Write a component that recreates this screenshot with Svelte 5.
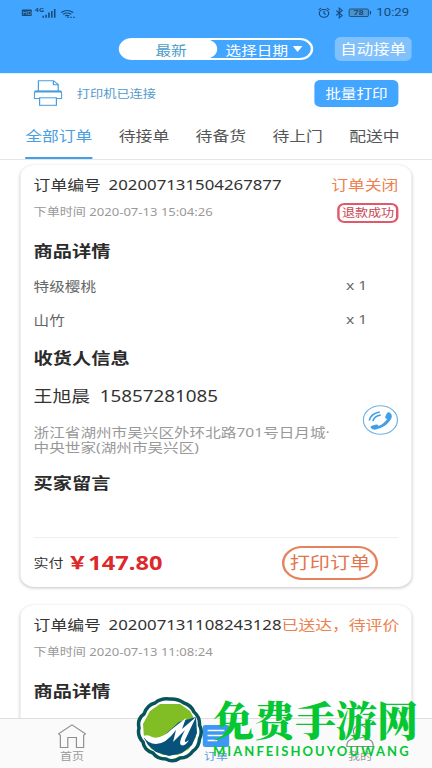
<script>
    let dateMode = "最新";
    let activeTab = "全部订单";
    const tabs = ["全部订单", "待接单", "待备货", "待上门", "配送中"];

    const orders = [
        {
            id: "202007131504267877",
            time: "2020-07-13 15:04:26",
            status: "订单关闭",
            refund: "退款成功",
            items: [
                { name: "特级樱桃", count: 1 },
                { name: "山竹", count: 1 },
            ],
            receiver: "王旭晨",
            phone: "15857281085",
            address: ["浙江省湖州市吴兴区外环北路701号日月城·", "中央世家(湖州市吴兴区)"],
            total: "147.80",
        },
        {
            id: "202007131108243128",
            time: "2020-07-13 11:08:24",
            status: "已送达，待评价",
            items: [],
        },
    ];
</script>

<div class="page">
    <div class="app">
        <header class="header">
            <div class="status-bar">
                <svg width="53" height="14" viewBox="0 0 53 14">
                    <rect x="0" y="3.5" width="8.5" height="6.500" rx="1" fill="#174a78" />
                    <text x="1" y="8.700" font-size="5" fill="#5ca8e8">HD</text>
                    <text x="11" y="6" font-size="6" font-weight="bold" fill="#174a78">4G</text>
                    <path d="M18 11.7v-2M20.4 11.7v-3M22.8 11.7V6.5M25.2 11.7V5M27.6 11.7V3" stroke="#174a78" stroke-width="1.3" />
                    <path d="M33 6.5q5-4 10 0M34.6 8.3q3.4-2.7 6.8 0M36.3 10q1.7-1.3 3.4 0" fill="none" stroke="#174a78" stroke-width="1.1" />
                    <path d="M38 11.3h1.2M40.5 11.3h1.2M43 11.3h1.2" stroke="#174a78" stroke-width="1.3" />
                </svg>
                <div class="status-right">
                    <svg width="46" height="14" viewBox="0 0 46 14">
                        <g fill="none" stroke="#174a78">
                            <circle cx="5" cy="7.3" r="3.9" />
                            <path d="M5 5v2.5l1.6 1M.5 4l2-2M9.500 4l-2-2" />
                            <path d="M15.2 4.6l5 5-2.5 2.3v-9.8l2.5 2.3-5 5" stroke-width=".9" />
                            <rect x="26" y="3" width="16" height="7.5" rx="1" fill="#4c92cc" stroke-width=".8" />
                            <path d="M43.7 5v3.5" />
                        </g>
                        <text x="29.500" y="9.500" font-size="7.5" font-weight="bold" fill="#174a78">78</text>
                    </svg>
                    <span>10:29</span>
                </div>
            </div>
            <div class="toolbar">
                <div class="switch">
                    <button class="switch-item" class:selected={dateMode === "最新"}>最新</button>
                    <button class="switch-item date">选择日期<i class="arrow"></i></button>
                </div>
                <button class="auto">自动接单</button>
            </div>
        </header>

        <div class="printer">
            <svg width="24" height="26" viewBox="0 0 24 26" fill="none" stroke="#479ddd">
                <path d="M4 11V.7h12.5l4 3.8V11M16.5.7v4h4" />
                <path d="M4.5 18.5H.6v-5.3q0-2 2-2h18.8q2 0 2 2v5.3h-4" />
                <path d="M.8 11.5h22.4" stroke-width="2" />
                <rect x="5" y="17.8" width="14" height="7.5" />
            </svg>
            <span class="printer-state">打印机已连接</span>
            <button class="batch">批量打印</button>
        </div>

        <nav class="tabs">
            {#each tabs as tab}
                <button class="tab" class:active={tab === activeTab} on:click={() => (activeTab = tab)}>{tab}</button>
            {/each}
        </nav>

        <main class="orders">
            {#each orders as order}
                <section class="card">
                    <div class="row order-id">
                        <span>订单编号</span>
                        <span class="number">{order.id}</span>
                        <span class="status">{order.status}</span>
                    </div>
                    <div class="row order-time">
                        <span>下单时间 {order.time}</span>
                        {#if order.refund}
                            <span class="refund">{order.refund}</span>
                        {/if}
                    </div>
                    <h2 class="goods-title">商品详情</h2>
                    {#each order.items as item}
                        <div class="row item">
                            <span>{item.name}</span>
                            <span>x {item.count}</span>
                        </div>
                    {/each}
                    {#if order.receiver}
                        <h2>收货人信息</h2>
                        <div class="contact">
                            <div>
                                <div class="receiver">
                                    <span>{order.receiver}</span>
                                    <span>{order.phone}</span>
                                </div>
                                <div class="address">
                                    {#each order.address as line}
                                        <div>{line}</div>
                                    {/each}
                                </div>
                            </div>
                            <svg class="call" width="30" height="30" viewBox="0 0 30 30">
                                <circle cx="15" cy="15" r="14.2" fill="none" stroke="#70b3e3" />
                                <path d="M20.5 8.1 Q22 6.7 23.3 8 Q25.8 11 23.2 15.2 Q19 22.5 11 24.6 Q7.7 25 6.8 22.5 Q6.5 21.2 8.6 20.5 L11.6 19.5 Q13.2 19.3 13.5 21 Q18.3 18.5 20.6 14 Q18.8 13.4 19 11.7 Z" fill="#3f9fe8" />
                                <path d="M5.8 15.5Q7 8.5 14.5 7M8.7 16.2Q9.8 11 15.3 10" fill="none" stroke="#3f9fe8" stroke-width="1.4" />
                            </svg>
                        </div>
                        <h2 class="message-title">买家留言</h2>
                        <div class="card-footer">
                            <span>实付</span>
                            <strong class="price"><span class="yen">￥</span>{order.total}</strong>
                            <button class="print">打印订单</button>
                        </div>
                    {/if}
                </section>
            {/each}
        </main>

        <footer class="bottom-nav">
            <div class="nav-item">
                <svg width="24" height="25" viewBox="0 0 24 25" fill="none" stroke="#8f8f8f">
                    <path d="M2.3 11.3.8 9.8 12 .8l11.2 9-1.5 1.5V23.4h-6V13.6H8.5v9.8H2.3z" />
                </svg>
                <span>首页</span>
            </div>
            <div class="nav-item current">
                <svg width="24" height="25" viewBox="0 0 24 25">
                    <rect x="1" y="1" width="22" height="22" rx="2" fill="#3d98f5" />
                    <path d="M5 6.5h14M5 11.5h14M5 16.5h8" stroke="#fff" stroke-width="1.6" />
                </svg>
                <span>订单</span>
            </div>
            <div class="nav-item">
                <svg width="24" height="25" viewBox="0 0 24 25" fill="none" stroke="#8f8f8f">
                    <ellipse cx="12" cy="7.5" rx="5.5" ry="6.5" />
                    <path d="M8.5 13 3 16.5Q1 18 1 22.5h22q0-4.5-2-6L15.5 13" />
                </svg>
                <span>我的</span>
            </div>
        </footer>
    </div>

    <div class="watermark">
        <svg width="67" height="66" viewBox="0 0 67 66">
            <path d="M33.5 2 Q42 1.5 48 6 Q55 8 58 15 Q64 20 63.5 28 Q67 35 63.5 42 Q63 50 57 54 Q52 61 44 61 Q37 66 30 62 Q21 62 17 56 Q8 53 7 45 Q1 39 3 31 Q1 22 8 17 Q11 8 19 6 Q25 1 33.5 2Z" fill="#fff" stroke="#07545a" stroke-width="3.5" />
            <path d="M24 7H44L54 14 60 25 60 40 53 52 42 58 27 58 15 52 8 41 7 27 14 14Z" fill="#81bd24" />
            <path d="M8 41Q22 47 33 34L43 25 60 20 61 36 56 48 46 56 33 59 20 55 12 48Z" fill="#06527b" />
            <path d="M7 39Q12 37 16 40Q25 43 36 32L50 21 46 32 60 20 49 43Q48 47 53 43 49 50 45 48 42 46 49 33L37 45 40 33Q30 47 20 47 12 47 7 39Z" fill="#fff" />
        </svg>
        <div class="brand">
            <div class="brand-name">免费手游网</div>
            <div class="brand-latin">MIANFEISHOUYOUWANG</div>
        </div>
    </div>
</div>

<style>
    :global(body) {
        margin: 0;
        background-color: #ffffff;
    }

    .page {
        position: relative;
        width: 432px;
        height: 768px;
        overflow: hidden;
        font-family: "Noto Sans", "Noto Sans CJK SC", sans-serif;
    }

    /* wide pixels: a 360px layout stretched over the full width */
    .app {
        display: flex;
        flex-direction: column;
        width: 360px;
        height: 768px;
        transform: scaleX(1.2);
        transform-origin: 0 0;
        background-color: #ffffff;
        color: #333333;
        font-size: 14px;
    }

    button {
        padding: 0;
        border: none;
        background: none;
        color: inherit;
        font-family: inherit;
        font-size: inherit;
    }

    .header {
        height: 73px;
        flex: none;
        background-color: #42a5ff;
        border-bottom: 1px solid #d5f0ff;
    }

    .status-bar {
        display: flex;
        justify-content: space-between;
        height: 25px;
        padding: 0 19px 0 18px;
        align-items: center;
    }

    .status-right {
        display: flex;
        align-items: center;
        gap: 3px;
        color: #174a78;
        font-family: Roboto, sans-serif;
        font-size: 11px;
    }

    .toolbar {
        display: flex;
        justify-content: flex-end;
        align-items: center;
        gap: 18px;
        height: 48px;
        padding-right: 17px;
    }

    .switch {
        display: flex;
        box-sizing: border-box;
        width: 162px;
        height: 22px;
        border: 2px solid #ffffff;
        border-radius: 11px;
        color: #ffffff;
        font-size: 13px;
        line-height: 17px;
    }

    .switch-item.selected {
        width: 81px;
        margin: -1px 0 -1px -1px;
        padding-left: 4px;
        border-radius: 11px;
        background-color: #ffffff;
        color: #4a9ccb;
    }

    .switch-item.date {
        display: flex;
        flex: 1;
        align-items: center;
        justify-content: center;
        gap: 4px;
    }

    .arrow {
        border: 4.5px solid transparent;
        border-top: 6px solid #ffffff;
        border-bottom: 0;
    }

    .auto {
        width: 64px;
        height: 24px;
        border-radius: 5px;
        background-color: #80c1fc;
        color: #ffffff;
        font-size: 13.7px;
        line-height: 24px;
    }

    .printer {
        display: flex;
        align-items: center;
        flex: none;
        height: 38px;
        padding: 0 28px;
    }

    .printer-state {
        margin-left: 12px;
        color: #559acb;
        font-size: 11px;
    }

    .batch {
        width: 70px;
        height: 27px;
        margin-left: auto;
        padding-bottom: 1px;
        border-radius: 5px;
        background-color: #42a5ff;
        color: #ffffff;
        font-size: 13px;
    }

    .tabs {
        display: flex;
        flex: none;
        justify-content: space-between;
        height: 47px;
        padding: 0 27px 0 21px;
        border-bottom: 1px solid #e6e6e6;
    }

    .tab {
        box-sizing: border-box;
        padding-top: 1px;
        border-bottom: 2px solid transparent;
        color: #555555;
    }

    .tab.active {
        border-bottom-color: #429fe9;
        color: #4b9fdd;
    }

    .orders {
        display: flex;
        flex: 1;
        flex-direction: column;
        gap: 18px;
        min-height: 0;
        padding: 5px 17px 0;
        overflow: hidden;
    }

    .card {
        flex: none;
        box-sizing: border-box;
        min-height: 200px;
        padding: 9px 11px 0;
        border-radius: 12px;
        background-color: #ffffff;
        box-shadow: 0 1px 3px rgba(0, 0, 0, 0.24);
    }

    .row {
        display: flex;
        align-items: center;
    }

    .order-id {
        height: 20px;
        white-space: nowrap;
    }

    .number {
        margin-left: 6.5px;
    }

    .status {
        margin-left: auto;
        color: #ed814f;
    }

    .order-time {
        justify-content: space-between;
        height: 33px;
        color: #999999;
        font-size: 10.9px;
    }

    .refund {
        box-sizing: border-box;
        height: 20px;
        margin-top: 5px;
        padding: 0 1.5px;
        border: 2px solid #e0596b;
        border-radius: 6px;
        color: #c84553;
        line-height: 15px;
    }

    h2 {
        height: 42px;
        margin: 0;
        color: #2b2b2b;
        font-size: 16px;
        line-height: 44px;
    }

    .goods-title {
        height: 41px;
        line-height: 48px;
    }

    .item {
        justify-content: space-between;
        height: 34px;
        padding-right: 26px;
        color: #666666;
        font-size: 13px;
    }

    .contact {
        display: flex;
        align-items: center;
        justify-content: space-between;
        height: 77px;
    }

    .receiver {
        display: flex;
        gap: 8px;
        height: 35px;
        font-size: 15.7px;
        line-height: 36px;
    }

    .address {
        padding-top: 12px;
        color: #999999;
        font-size: 13px;
        line-height: 15px;
        white-space: nowrap;
    }

    .call {
        flex: none;
        margin-top: 6px;
    }

    .message-title {
        height: 82px;
        line-height: 56px;
    }

    .card-footer {
        display: flex;
        align-items: center;
        height: 49px;
        border-top: 1px solid #eeeeee;
        font-size: 12.5px;
    }

    .price {
        display: flex;
        align-items: center;
        margin-left: 3px;
        color: #dc292c;
        font-size: 19.7px;
        line-height: 30px;
    }

    .yen {
        width: 17.5px;
        font-size: 17px;
        font-weight: 900;
    }

    .print {
        box-sizing: border-box;
        width: 80px;
        height: 34px;
        margin: 0 17px 0 auto;
        border: 2px solid #e5835f;
        border-radius: 17px;
        color: #e2754d;
        font-size: 16.8px;
        line-height: 29px;
    }

    .bottom-nav {
        display: flex;
        flex: none;
        height: 49px;
        border-top: 1px solid #dedede;
        background-color: #fafafa;
    }

    .nav-item {
        display: flex;
        flex: 1;
        flex-direction: column;
        align-items: center;
        padding-top: 5px;
        color: #999999;
        font-size: 10px;
        line-height: 15px;
    }

    .nav-item.current {
        color: #559be0;
    }

    .watermark {
        position: absolute;
        left: 136px;
        bottom: 5px;
        display: flex;
        align-items: center;
        gap: 10px;
    }

    .brand {
        color: #05c734;
        white-space: nowrap;
    }

    .brand-name {
        font-family: "Noto Serif CJK SC", "Noto Sans CJK SC", serif;
        font-size: 41px;
        font-weight: 900;
        line-height: 41px;
    }

    .brand-latin {
        font-family: Lato, sans-serif;
        font-size: 13px;
        font-weight: bold;
        letter-spacing: 2.05px;
        line-height: 24px;
    }
</style>
